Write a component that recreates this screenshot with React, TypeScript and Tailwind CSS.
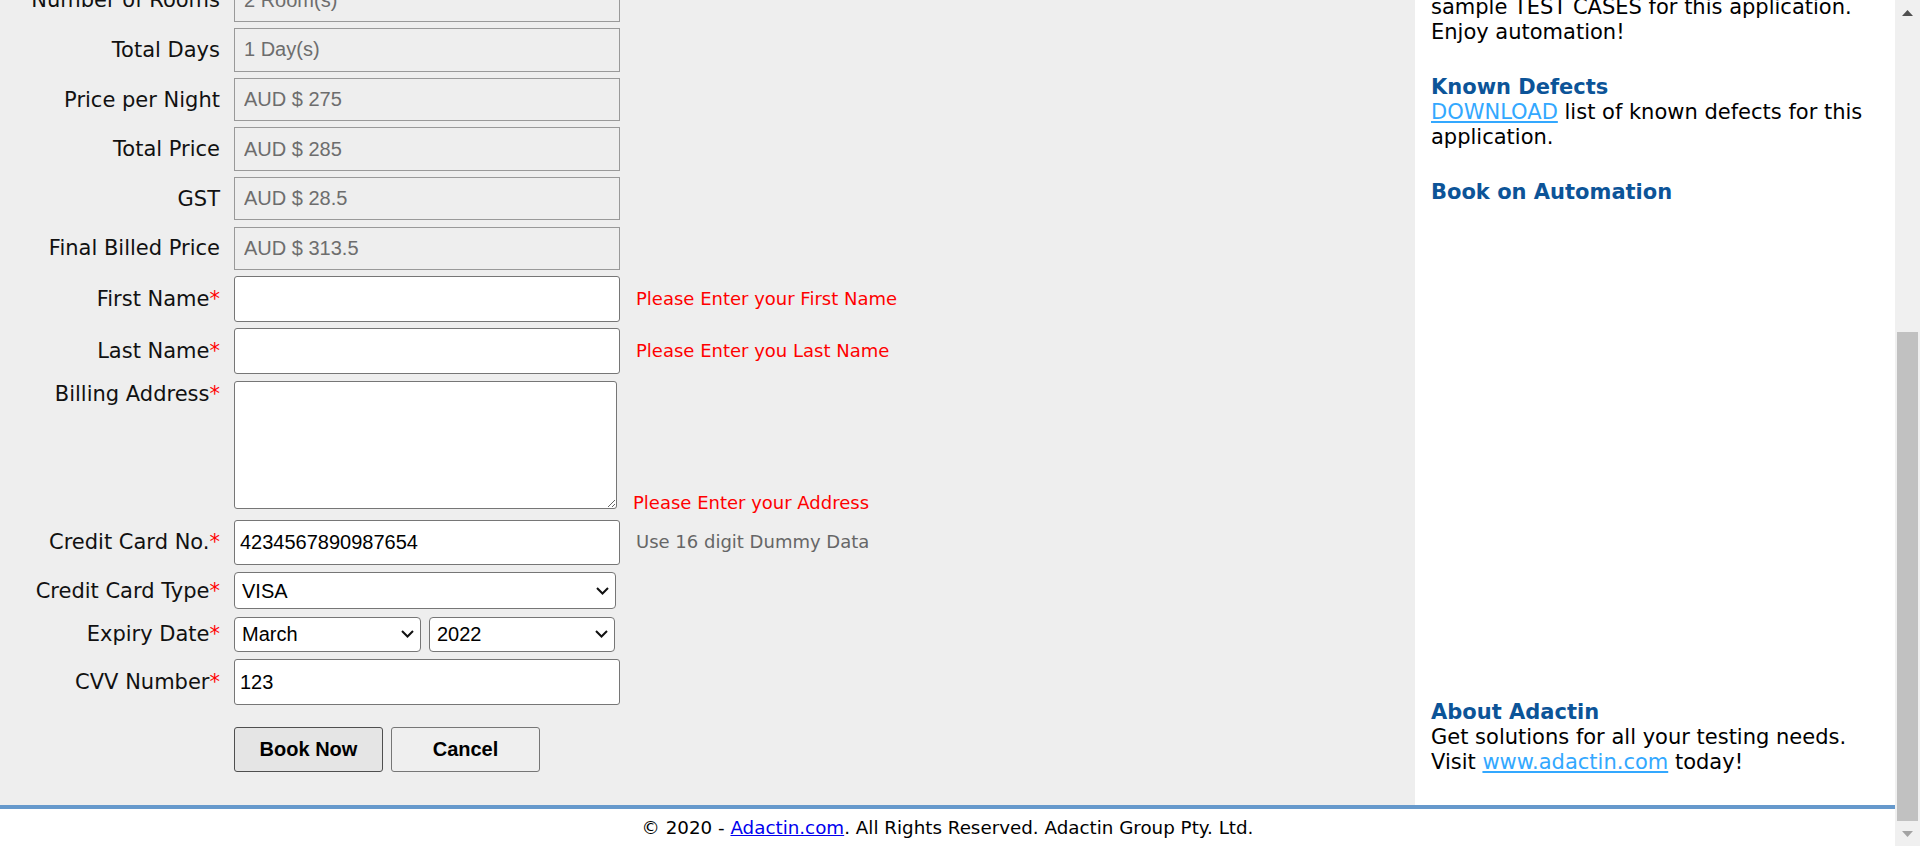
import { ReactNode } from "react"

const labelCls =
  "w-[220px] shrink-0 text-right text-[21px] leading-[26px] text-[#111] font-[DejaVu_Sans,Verdana,sans-serif] whitespace-nowrap"
const inputCls =
  "w-[386px] h-full rounded-[3px] border border-[#767676] bg-white px-[5px] text-[20px] text-black font-[Liberation_Sans,Arial,sans-serif] outline-none"
const noteCls = "ml-[16px] text-[18px] leading-[22px] font-[DejaVu_Sans,Verdana,sans-serif] whitespace-nowrap"

const summary = [
  ["Number of Rooms", "2 Room(s)"],
  ["Total Days", "1 Day(s)"],
  ["Price per Night", "AUD $ 275"],
  ["Total Price", "AUD $ 285"],
  ["GST", "AUD $ 28.5"],
  ["Final Billed Price", "AUD $ 313.5"],
]

function Label({ text, req, className = "" }: { text: string; req?: boolean; className?: string }) {
  return (
    <div className={`${labelCls} ${className}`}>
      {text}
      {req && <span className="text-[#ff0000]">*</span>}
    </div>
  )
}

function Chevron() {
  return (
    <svg
      className="pointer-events-none absolute right-[7px] top-1/2 -translate-y-1/2"
      width="13"
      height="8"
      viewBox="0 0 13 8"
    >
      <path d="M1 1 L6.5 6.5 L12 1" fill="none" stroke="#111" strokeWidth="2" />
    </svg>
  )
}

function Select({ value, options, className }: { value: string; options: string[]; className: string }) {
  return (
    <div className={`relative h-full ${className}`}>
      <select
        defaultValue={value}
        className="h-full w-full appearance-none rounded-[4px] border border-[#767676] bg-white pl-[7px] text-[20px] text-black font-[Liberation_Sans,Arial,sans-serif] outline-none"
      >
        {options.map((o) => (
          <option key={o}>{o}</option>
        ))}
      </select>
      <Chevron />
    </div>
  )
}

function Row({ className, children }: { className: string; children: ReactNode }) {
  return <div className={`flex items-center ${className}`}>{children}</div>
}

function BookingForm() {
  return (
    <div className="flex flex-col">
      {summary.map(([label, value], i) => (
        <Row key={label} className={i === 0 ? "mt-[-21.3px] h-[43.4px]" : "mt-[6.2px] h-[43.4px]"}>
          <Label text={label} />
          <input
            readOnly
            value={value}
            className="ml-[14px] h-full w-[386px] border border-[#999] bg-transparent px-[9px] text-[20px] text-[#6d6d6d] font-[Liberation_Sans,Arial,sans-serif] outline-none"
          />
        </Row>
      ))}

      <Row className="mt-[5.9px] h-[46px]">
        <Label text="First Name" req />
        <input className={`ml-[14px] ${inputCls}`} defaultValue="" />
        <span className={`${noteCls} text-[#ff0000]`}>Please Enter your First Name</span>
      </Row>

      <Row className="mt-[6.3px] h-[46px]">
        <Label text="Last Name" req />
        <input className={`ml-[14px] ${inputCls}`} defaultValue="" />
        <span className={`${noteCls} text-[#ff0000]`}>Please Enter you Last Name</span>
      </Row>

      <div className="mt-[6.7px] flex h-[128.3px] items-end">
        <Label text="Billing Address" req className="self-start" />
        <textarea className="ml-[14px] h-full w-[383px] rounded-[3px] border border-[#767676] bg-white outline-none" />
        <span className={`${noteCls} mb-[-4.5px] text-[#ff0000]`}>Please Enter your Address</span>
      </div>

      <Row className="mt-[10.7px] h-[45px]">
        <Label text="Credit Card No." req />
        <input className={`ml-[14px] ${inputCls}`} defaultValue="4234567890987654" />
        <span className={`${noteCls} text-[#666]`}>Use 16 digit Dummy Data</span>
      </Row>

      <Row className="mt-[7.3px] h-[37px]">
        <Label text="Credit Card Type" req />
        <Select
          value="VISA"
          options={["Select Credit Card Type", "American Express", "VISA", "Master Card", "Other"]}
          className="ml-[14px] w-[382px]"
        />
      </Row>

      <Row className="mt-[7.4px] h-[35.6px]">
        <Label text="Expiry Date" req />
        <Select
          value="March"
          options={["January", "February", "March", "April", "May", "June"]}
          className="ml-[14px] w-[187px]"
        />
        <Select value="2022" options={["2021", "2022", "2023", "2024"]} className="ml-[8px] w-[186px]" />
      </Row>

      <Row className="mt-[7px] h-[46px]">
        <Label text="CVV Number" req />
        <input className={`ml-[14px] ${inputCls}`} defaultValue="123" />
      </Row>

      <div className="mt-[21.7px] flex h-[45px] gap-[8px] pl-[234px]">
        <button className="h-full w-[149px] rounded-[3px] border border-[#4f4f4f] bg-[#e5e5e5] text-[20px] font-bold text-black font-[Liberation_Sans,Arial,sans-serif]">
          Book Now
        </button>
        <button className="h-full w-[149px] rounded-[3px] border border-[#767676] bg-[#efefef] text-[20px] font-bold text-black font-[Liberation_Sans,Arial,sans-serif]">
          Cancel
        </button>
      </div>
    </div>
  )
}

function Sidebar() {
  return (
    <aside className="w-[480px] shrink-0 overflow-hidden bg-white pl-[16px] pr-[16px] text-[21px] leading-[25px] text-black font-[DejaVu_Sans,Verdana,sans-serif]">
      <div className="mt-[-4.8px]">
        <p>
          sample TEST CASES for this application.
          <br />
          Enjoy automation!
        </p>
        <h3 className="mt-[30px] font-bold text-[#0c5498]">Known Defects</h3>
        <p>
          <a href="#" className="text-[#33a8ff] underline">
            DOWNLOAD
          </a>{" "}
          list of known defects for this application.
        </p>
        <h3 className="mt-[30px] font-bold text-[#0c5498]">Book on Automation</h3>
        <div className="h-[495px]" />
        <h3 className="font-bold text-[#0c5498]">About Adactin</h3>
        <p>
          Get solutions for all your testing needs.
          <br />
          Visit{" "}
          <a href="#" className="text-[#33a8ff] underline">
            www.adactin.com
          </a>{" "}
          today!
        </p>
      </div>
    </aside>
  )
}

function Scrollbar() {
  return (
    <div className="flex h-full w-[25px] shrink-0 flex-col items-center bg-[#f0f0f0]">
      <div className="flex h-[25px] items-center justify-center">
        <svg width="11" height="6" viewBox="0 0 11 6">
          <polygon points="0,6 5.5,0 11,6" fill="#505050" />
        </svg>
      </div>
      <div className="h-[307px]" />
      <div className="h-[489px] w-[21px] bg-[#c1c1c1]" />
      <div className="flex flex-1 items-center justify-center">
        <svg width="11" height="6" viewBox="0 0 11 6">
          <polygon points="0,0 11,0 5.5,6" fill="#a3a3a3" />
        </svg>
      </div>
    </div>
  )
}

export default function App() {
  return (
    <div className="flex h-[846px] w-[1920px] overflow-hidden bg-white">
      <div className="flex h-full w-[1895px] flex-col">
        <div className="flex h-[805px] overflow-hidden">
          <main className="w-[1415px] shrink-0 overflow-hidden bg-[#eeeeee]">
            <BookingForm />
          </main>
          <Sidebar />
        </div>
        <div className="h-[4px] bg-[#6699cc]" />
        <footer className="flex flex-1 items-center justify-center text-[18.3px] text-black font-[DejaVu_Sans,Verdana,sans-serif]">
          <span>
            © 2020 -{" "}
            <a href="#" className="text-[#0000ee] underline">
              Adactin.com
            </a>
            . All Rights Reserved. Adactin Group Pty. Ltd.
          </span>
        </footer>
      </div>
      <Scrollbar />
    </div>
  )
}
